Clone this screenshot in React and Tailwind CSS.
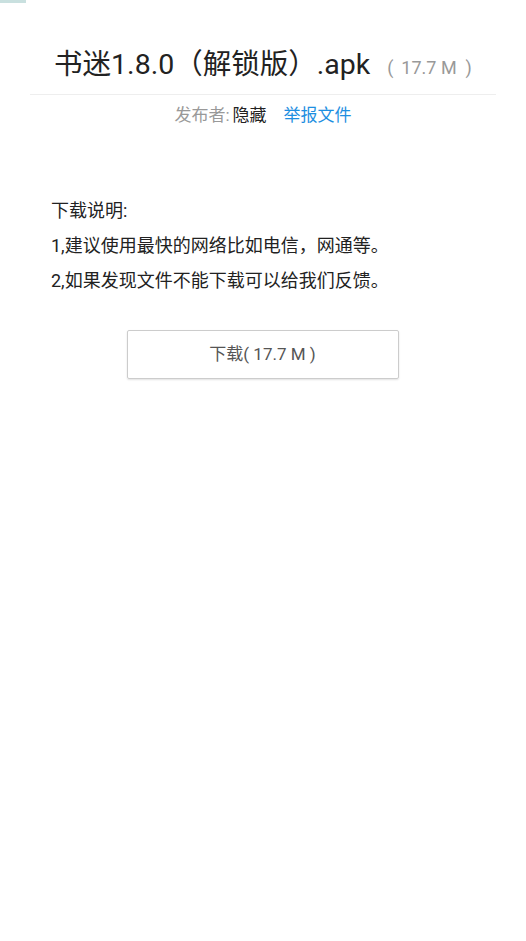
export default function App() {
  const font = { fontFamily: 'Roboto, "Noto Sans CJK SC", sans-serif' };
  return (
    <div className="w-[526px] h-[941px] bg-white relative" style={font}>
      <div className="absolute left-0 top-0 w-[26px] h-[3px] bg-[#c9e0df]" />
      <div className="pt-[45px] px-[30px]">
        <div className="flex items-baseline justify-center pb-[9px] border-b border-[#eeeeee]">
          <span className="text-[28.5px] leading-[40px] text-[#222]">书迷1.8.0（解锁版）.apk</span>
          <span className="text-[18px] text-[#999] ml-[17px] flex">
            <span>(</span>
            <span className="ml-[8px] mr-[9px]">17.7 M</span>
            <span>)</span>
          </span>
        </div>
        <div className="flex justify-center mt-[8px] text-[17px] leading-[24px]">
          <span className="text-[#999]">发布者:</span>
          <span className="text-[#222] ml-[3px]">隐藏</span>
          <span className="text-[#1e8fe1] ml-[17px]">举报文件</span>
        </div>
      </div>
      <div className="mt-[66px] pl-[51px] text-[18px] leading-[35px] text-[#222]">
        <div>下载说明:</div>
        <div>1,建议使用最快的网络比如电信，网通等。</div>
        <div>2,如果发现文件不能下载可以给我们反馈。</div>
      </div>
      <div className="flex justify-center mt-[32px]">
        <div className="ml-[-1px] w-[272px] h-[49px] border border-[#cccccc] rounded-[2px] shadow-[0_1px_2px_rgba(0,0,0,0.12)] flex items-center justify-center text-[17px] text-[#555]">
          下载( 17.7 M )
        </div>
      </div>
    </div>
  );
}
